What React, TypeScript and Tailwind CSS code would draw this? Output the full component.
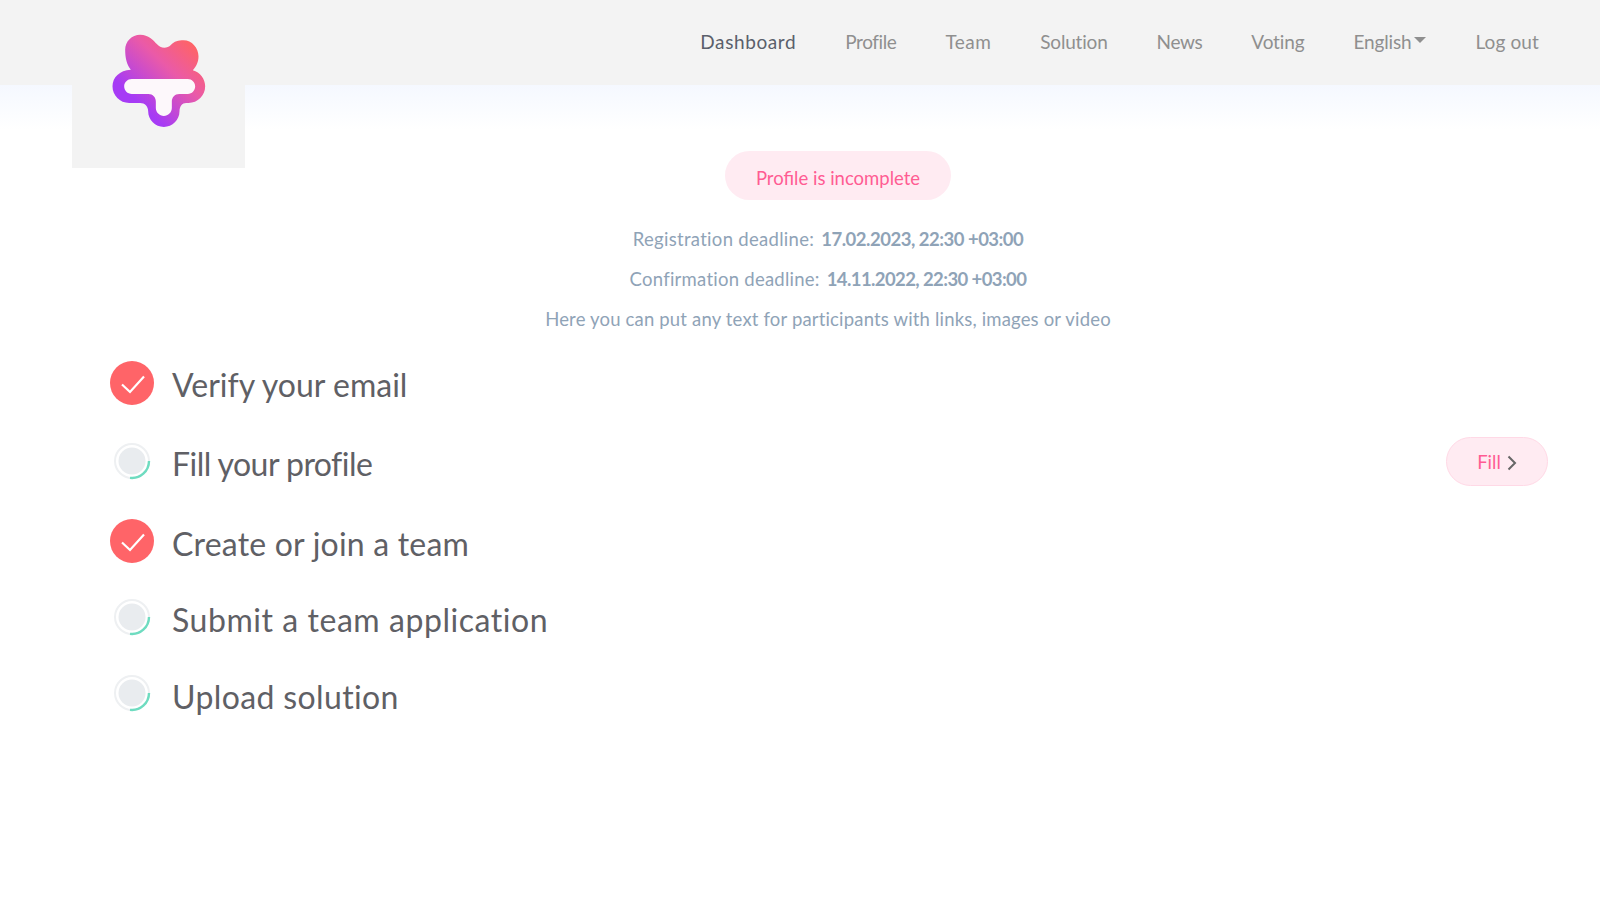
import React from 'react';

const navItems = [
  { label: 'Dashboard', spacing: 'tracking-[0.6px] text-[#5a5f6b]' },
  { label: 'Profile', spacing: 'tracking-[-0.4px]' },
  { label: 'Team', spacing: 'tracking-[0.45px]' },
  { label: 'Solution', spacing: 'tracking-[-0.2px]' },
  { label: 'News', spacing: 'tracking-[-0.35px]' },
  { label: 'Voting', spacing: 'tracking-[-0.14px]' },
];

const steps = [
  { label: 'Verify your email', done: true, height: 'h-[78px]', spacing: 'tracking-[0px]' },
  { label: 'Fill your profile', done: false, height: 'h-[80px]', spacing: 'tracking-[-0.54px]', action: true },
  { label: 'Create or join a team', done: true, height: 'h-[79px]', spacing: 'tracking-[0.2px]' },
  { label: 'Submit a team application', done: false, height: 'h-[74px]', spacing: 'tracking-[0.55px]' },
  { label: 'Upload solution', done: false, height: 'h-[79px]', spacing: 'tracking-[0.37px]' },
];

function Logo() {
  return (
    <svg width="97" height="95" viewBox="150 100 290 285" fill="none">
      <defs>
        <linearGradient id="logoGrad" x1="190" y1="350" x2="400" y2="130" gradientUnits="userSpaceOnUse">
          <stop offset="0.2" stopColor="#a63bf5" />
          <stop offset="0.65" stopColor="#ea5aa8" />
          <stop offset="1" stopColor="#ff6464" />
        </linearGradient>
      </defs>
      <path
        fill="url(#logoGrad)"
        d="M240 105C265 105 280 122 290 133C300 146 320 148 332 136C342 125 355 122 370 122C395 122 415 145 415 170C415 188 408 200 398 212C420 218 435 238 435 260C435 288 413 310 385 310H378C366 310 358 320 358 335C358 361 337 382 311 382C285 382 264 361 264 335C264 320 254 310 240 310H207C179 310 157 288 157 260C157 233 178 212 212 210C200 195 195 175 195 150C195 125 215 105 240 105Z"
      />
      <path
        fill="#fdf8fb"
        d="M215 238C202 238 192 248 192 260C192 273 202 283 215 283H265C278 283 287 293 287 306V325C287 338 298 349 311 349C324 349 335 338 335 325V306C335 293 344 283 357 283H383C395 283 405 273 405 260C405 248 395 238 383 238Z"
      />
    </svg>
  );
}

function StepIcon({ done }: { done: boolean }) {
  if (done) {
    return (
      <svg width="44" height="44" viewBox="0 0 44 44" className="mb-[5px] shrink-0">
        <circle cx="22" cy="22" r="22" fill="#ff6468" />
        <path d="M12 23.5L20 31L34 15.5" fill="none" stroke="#fff" strokeWidth="2.2" />
      </svg>
    );
  }
  return (
    <svg width="44" height="44" viewBox="0 0 44 44" className="mb-[5px] shrink-0">
      <circle cx="22" cy="21" r="17" fill="none" stroke="#eef0f2" strokeWidth="2" />
      <path d="M39 21A17 17 0 0 1 20 37.9" fill="none" stroke="#6edcc0" strokeWidth="2.4" />
      <circle cx="22" cy="21" r="13.5" fill="#e9ecef" />
    </svg>
  );
}

export default function App() {
  return (
    <div className="relative min-h-[900px] bg-white font-['Lato',sans-serif]">
      <header className="flex h-[85px] items-start justify-end bg-[#f3f3f3] pr-[61px] pt-[29px] text-[19px] leading-[26px] text-[#8f8f8f]">
        <nav className="flex items-center gap-[49px]">
          {navItems.map((item) => (
            <a key={item.label} className={`whitespace-nowrap ${item.spacing}`}>
              {item.label}
            </a>
          ))}
          <a className="flex items-center gap-[3px] tracking-[-0.15px]">
            English
            <span className="mb-[4px] h-0 w-0 border-x-[6px] border-t-[6px] border-x-transparent border-t-[#8f8f8f]" />
          </a>
          <a className="whitespace-nowrap tracking-[0.12px]">Log out</a>
        </nav>
      </header>

      {/* logo tab hangs below the header */}
      <div className="absolute left-[72px] top-0 z-10 flex h-[168px] w-[173px] items-start justify-center bg-[#f3f3f3] pt-[33px]">
        <Logo />
      </div>

      <main className="bg-gradient-to-b from-[#f5f8ff] to-white to-[45px] pl-[72px] pr-[16px]">
        <div className="flex flex-col items-center pt-[66px] text-[18.5px] leading-[26px] text-[#8fa3b7]">
          <div className="ml-[20px] flex h-[49px] w-[226px] items-center justify-center rounded-full bg-[#ffebf2] pt-[4px] text-[#ff5c93]">
            Profile is incomplete
          </div>
          <p className="mt-[26px] tracking-[0.3px]">
            Registration deadline: <b className="ml-[2px] font-bold tracking-[-0.5px]">17.02.2023, 22:30 +03:00</b>
          </p>
          <p className="mt-[14px] tracking-[0.25px]">
            Confirmation deadline: <b className="ml-[2px] font-bold tracking-[-0.6px]">14.11.2022, 22:30 +03:00</b>
          </p>
          <p className="mt-[14px] tracking-[0.17px]">Here you can put any text for participants with links, images or video</p>
        </div>

        <ul className="mt-[14px] pl-[38px] pr-[36px]">
          {steps.map((step) => (
            <li key={step.label} className={`flex items-center ${step.height}`}>
              <StepIcon done={step.done} />
              <span className={`ml-[18px] text-[32px] leading-[40px] text-[#5f6065] ${step.spacing}`}>{step.label}</span>
              {step.action && (
                <button className="mb-[6px] ml-auto flex h-[49px] w-[102px] items-center justify-center gap-[6px] rounded-full border border-[#ffd9e6] bg-[#ffebf2] pt-[4px] text-[18.5px] text-[#ff5c93]">
                  Fill
                  <svg width="10" height="16" viewBox="0 0 10 16" fill="none">
                    <path d="M1.5 1.5L8 8L1.5 14.5" stroke="#666" strokeWidth="2" />
                  </svg>
                </button>
              )}
            </li>
          ))}
        </ul>
      </main>
    </div>
  );
}
